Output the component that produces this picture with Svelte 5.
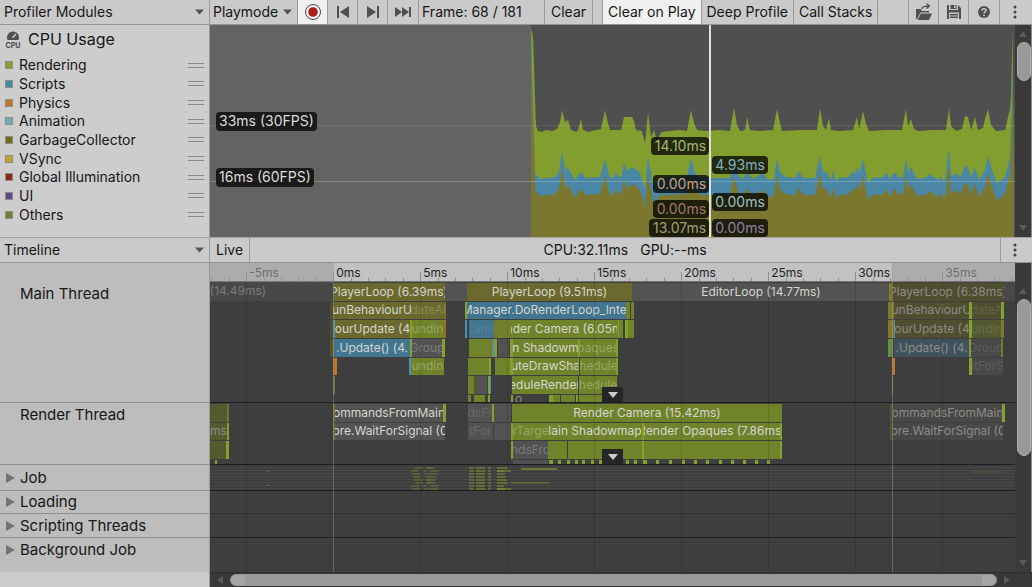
<script>
  const legend = [
    ['Rendering', '#829e2e'],
    ['Scripts', '#4a87a6'],
    ['Physics', '#c47429'],
    ['Animation', '#6fadb5'],
    ['GarbageCollector', '#756a1f'],
    ['VSync', '#c2a233'],
    ['Global Illumination', '#8b2b17'],
    ['UI', '#5f4a8a'],
    ['Others', '#7b7a31']
  ];

  // Chart series, in chart units (805 x 212)
  const H = 212;
  const rendering = [[321,3],[323,12],[324,40],[325,75],[326,101],[328,106],[332,107],[336,105],[342,106],[347,104],[350,97],[352,85],[355,97],[358,95],[361,105],[366,107],[368,105],[371,94],[373,105],[378,107],[386,105],[391,104],[395,85],[398,98],[400,105],[411,105],[414,92],[422,92],[424,96],[426,105],[432,106],[435,118],[438,87],[441,112],[444,105],[447,116],[451,107],[460,106],[470,105],[477,106],[481,85],[484,98],[487,105],[497,106],[508,105],[520,106],[524,83],[527,100],[530,106],[535,105],[537,92],[540,105],[550,106],[563,105],[567,84],[570,98],[572,106],[590,105],[607,105],[610,83],[613,101],[616,105],[619,93],[621,105],[630,106],[643,105],[647,92],[649,104],[653,86],[656,99],[659,106],[675,105],[692,105],[696,84],[698,101],[701,94],[704,104],[708,106],[722,105],[736,105],[739,83],[741,101],[746,106],[752,104],[755,91],[758,92],[761,105],[765,92],[768,105],[773,103],[775,94],[778,84],[781,100],[786,106],[795,105],[798,92],[800,84],[801,72],[802.6,3]];
  const scripts = [[321,3],[322,45],[324,100],[325,148],[330,154],[345,152],[349,147],[352,126],[355,145],[358,143],[365,155],[371,147],[376,153],[390,152],[395,134],[399,150],[402,154],[406,148],[411,153],[414,138],[417,146],[423,142],[430,148],[435,164],[438,131],[441,148],[444,162],[450,153],[477,152],[481,133],[485,148],[490,153],[520,153],[524,134],[528,150],[533,154],[537,147],[543,154],[553,148],[558,155],[564,154],[567,133],[570,147],[575,152],[585,153],[589,146],[593,153],[605,153],[610,131],[613,148],[616,146],[621,155],[623,146],[626,156],[630,152],[638,153],[642,147],[644,149],[648,142],[650,148],[653,133],[658,158],[662,153],[673,152],[677,147],[679,154],[685,147],[688,152],[693,152],[696,133],[698,148],[701,142],[707,154],[717,152],[720,149],[728,155],[731,151],[733,156],[736,152],[738,128],[739,126],[741,151],[747,148],[750,153],[755,141],[758,142],[761,152],[765,142],[769,155],[775,145],[778,131],[782,145],[787,158],[795,152],[800,132],[801,100],[803,40]];
  const others = scripts.map(([x, y]) => [x, y + 17]);
  const area = (pts) => `321,${H} ` + pts.map((p) => p.join(',')).join(' ') + ` 804,${H}`;

  // Tags hanging beside the selected frame: side, top, text, colour
  const tags = [
    ['l', 112, '14.10ms', '#a9b574'],
    ['r', 131, '4.93ms', '#86aec2'],
    ['l', 150, '0.00ms', '#cda27c'],
    ['r', 168, '0.00ms', '#9cc3c8'],
    ['l', 175, '0.00ms', '#a0786b'],
    ['l', 194, '13.07ms', '#a3a07a'],
    ['r', 194, '0.00ms', '#8d84a3']
  ];

  const SPAN = 805;
  const pc = (v) => (v / SPAN) * 100 + '%';
  const ticks = Array.from({ length: 47 }, (_, i) => ({ x: 1.4 + i * 17.4, major: (i - 2) % 5 === 0 }));
  const majors = ticks.filter((t) => t.major).map((t, i) => ({ x: t.x, text: i * 5 - 5 + 'ms' }));

  // Bars: [start, end, colour class, label, dim level]
  const mainRows = [
    [[0,123,'idle'],[0,56,'idle','(14.49ms)',1],[123,235,'ol','PlayerLoop (6.39ms)'],[235,257,'ed'],[257,422,'ol','PlayerLoop (9.51ms)'],[422,680,'ed','EditorLoop (14.77ms)'],[682,794,'dol','PlayerLoop (6.38ms)',1],[679,682,'sol'],[794,805,'idle']],
    [[120,123,'dol'],[123,201,'ol','unBehaviourU'],[201,235,'ol','dateAl',1],[235,236,'sol'],[257,416,'bl','Manager.DoRenderLoop_Inter'],[255,257,'sg'],[416,420,'gr'],[421,424,'gr'],[684,759,'dol','unBehaviourU',1],[678,684,'sol'],[759,762,'sg'],[762,791,'dol','dateA',2],[791,794,'sg']],
    [[120,123,'dol'],[123,126,'sb'],[125,200,'ol','ourUpdate (4'],[200,202,'sg'],[202,233,'gr','undin',1],[233,236,'or2'],[255,257,'sb'],[259,284,'bl','Came',2],[284,287,'sol'],[287,413,'gr'],[301,407,'gr','nder Camera (6.05m'],[408,409,'sg'],[415,418,'sg'],[418,424,'gr'],[685,759,'dol','ourUpdate (4',1],[678,684,'sol'],[684,685,'sb'],[759,762,'sg'],[762,791,'dgr','undin',2],[791,794,'sol']],
    [[120,123,'dgr'],[123,124,'or'],[124,200,'bl','.Update() (4.'],[200,202,'sg'],[202,232,'gy','Group',1],[232,235,'sg'],[259,279,'gr'],[279,282,'sol'],[282,284,'sb'],[284,287,'sg'],[288,299,'gy'],[303,368,'gr','n Shadowm'],[300,303,'sg'],[368,370,'sg'],[370,406,'gr','paques',1],[406,408,'sg'],[684,759,'dbl','.Update() (4.',1],[678,681,'tg'],[681,683,'sol'],[759,761,'sg'],[761,791,'dgy','Group',2],[791,793,'sol']],
    [[123,127,'or'],[201,234,'gr','undin',1],[199,201,'sb'],[258,279,'gr'],[279,281,'sg'],[285,300,'gr'],[303,368,'gr','uteDrawSha'],[300,303,'sg'],[368,369,'sg'],[370,407,'gr','hedule',1],[406,408,'sg'],[682,685,'or'],[759,762,'sg'],[762,793,'dgy','itForS',2]],
    [[123,125,'sol'],[258,264,'gr'],[264,267,'dgr'],[267,277,'gy'],[278,280,'sg'],[280,281,'sb'],[302,368,'gr','eduleRender'],[369,407,'gr','hedule',1],[682,683,'sol']],
    [[258,261,'gr'],[264,275,'gr'],[278,280,'sg'],[301,303,'sg'],[303,314,'none','o',1],[339,343,'sg'],[343,350,'gr'],[351,365,'gr'],[366,368,'sg'],[369,396,'gr']]
  ];
  const renderRows = [
    [[0,17,'dgr'],[17,19,'tg2'],[125,233,'ed','ommandsFromMain'],[123,125,'sol'],[233,236,'sg'],[258,282,'gy','dsFr',2],[282,284,'sg'],[284,301,'gy'],[302,572,'gr','Render Camera (15.42ms)'],[683,792,'dgy','ommandsFromMain',1],[680,683,'tol'],[792,795,'sg']],
    [[0,17,'dgr','ms',1],[17,19,'sg'],[125,235,'ed','ore.WaitForSignal (0'],[123,125,'sol'],[258,283,'gy','tFor',2],[284,301,'gy'],[303,338,'gr','rTarge',1],[301,303,'sg'],[338,432,'gr','lain Shadowmap'],[432,434,'sg'],[434,570,'gr','Render Opaques (7.86ms)'],[570,572,'sg'],[683,793,'dgy','ore.WaitForSignal (0',1],[680,683,'tol']],
    [[0,16,'dgr'],[16,19,'sg'],[303,338,'gy','ndsFro',1],[301,303,'sg'],[338,357,'gr'],[358,432,'gr'],[432,434,'sg'],[434,570,'gr'],[570,572,'sg']],
    [[5,7,'sg'],[303,338,'gy'],...[339,433].map((x) => [x, x + 4, 'sg']),...[348,357,365,372,381,389,416,424,446,459,472,484,496,509,521,533,545,557].map((x) => [x, x + 3, 'sg'])]
  ];

  // Job worker samples: x, y, width, opacity
  const jobs = [];
  for (const y of [2, 5, 8, 11, 14, 17, 20, 23]) {
    const s = (y * 7) % 5;
    jobs.push([201 + s, y, 8, 0.35], [213 + s, y, 4, 0.3], [220 - s, y, 9, 0.35]);
    jobs.push([259, y, 5, 0.5], [266, y, 9, 0.55], [278, y, 3, 0.5], [287, y, 7 + s, 0.55]);
  }
  jobs.push([287, 5, 14, 0.6], [287, 23, 14, 0.6], [311, 3, 36, 0.7], [301, 17, 38, 0.4], [761, 6, 31, 0.2], [57, 5, 3, 0.3], [57, 19, 3, 0.3]);

  const groups = [['Job', 'h26'], ['Loading', 'h23'], ['Scripting Threads', 'h24'], ['Background Job', 'rest']];
</script>

{#snippet caret()}
  <svg class="caret" width="9" height="6" viewBox="0 0 9 6"><path d="M0 .5h9L4.5 5.5z" fill="#54544e" /></svg>
{/snippet}
{#snippet dots()}
  <svg width="4" height="14" viewBox="0 0 4 14" fill="#444"><circle cx="2" cy="2" r="1.5" /><circle cx="2" cy="7" r="1.5" /><circle cx="2" cy="12" r="1.5" /></svg>
{/snippet}
{#snippet arrow(d)}
  <svg class="arrow" width="8" height="6" viewBox="0 0 8 6"><path d={d === 'up' ? 'M0 6h8L4 0z' : 'M0 0h8L4 6z'} fill="#5b5b56" /></svg>
{/snippet}
{#snippet bars(rows)}
  {#each rows as row}
    <div class="row">
      {#each row as [a, b, kind, text, dim]}
        <div class="bar {kind}" style="left:{pc(a)};width:{pc(b - a)}">
          {#if text}<span class:dim={dim === 1} class:faint={dim === 2}>{text}</span>{/if}
        </div>
      {/each}
    </div>
  {/each}
{/snippet}

<div class="profiler">
  <header class="split toolbar">
    <label class="pick side"><select aria-label="Profiler Modules"><option>Profiler Modules</option></select>{@render caret()}</label>
    <div class="tools">
      <label class="pick mode"><select aria-label="Target"><option>Playmode</option></select>{@render caret()}</label>
      <button class="ico on" aria-label="Record"><svg width="18" height="18" viewBox="0 0 18 18"><circle cx="9" cy="9" r="7.5" fill="#f4f4f4" stroke="#444" /><circle cx="9" cy="9" r="4.8" fill="#a82018" /></svg></button>
      <button class="ico" aria-label="Previous frame"><svg width="14" height="12" viewBox="0 0 14 12" fill="#505050"><path d="M1 0h2v12H1zM13 0v12L4 6z" /></svg></button>
      <button class="ico" aria-label="Next frame"><svg width="14" height="12" viewBox="0 0 14 12" fill="#505050"><path d="M11 0h2v12h-2zM1 0v12l9-6z" /></svg></button>
      <button class="ico last" aria-label="Current frame"><svg width="18" height="12" viewBox="0 0 18 12" fill="#505050"><path d="M1 1v10l7-5zM8 1v10l7-5zM15 1h2v10h-2z" /></svg></button>
      <span class="frame">Frame: 68 / 181</span>
      <button>Clear</button>
      <span class="gap"></span>
      <button class="on tight">Clear on Play</button>
      <button class="tight">Deep Profile</button>
      <button class="tight">Call Stacks</button>
      <span class="fill"></span>
      <button class="ico" aria-label="Load"><svg width="18" height="18" viewBox="0 0 18 18"><path d="M1 16V6h5l1 2h7v1.500H5.500L2 16zM5.800 10.500H17L14 17H2.500z" fill="#505050" /><path d="M7 6c0-2.500 2-3 7-3M11.500.500L14.500 3l-3 2.500" fill="none" stroke="#505050" stroke-width="1.300" /></svg></button>
      <button class="ico" aria-label="Save"><svg width="16" height="16" viewBox="0 0 16 16"><path d="M1 1h2v5h9V1l3 3v11h-2V8.500H3V15H1z" fill="#505050" /><path d="M4.500 1h6v4h-6zM4 10h8v1.500H4zM4 12.500h8V14H4z" fill="#505050" /><path d="M8 1.500h1.500v2.500H8z" fill="#ccc" /></svg></button>
      <button class="ico help" aria-label="Help"><svg width="12" height="12" viewBox="0 0 12 12"><circle cx="6" cy="6" r="6" fill="#505050" /><path d="M4 4.600c0-2.500 4-2.500 4 0C8 6 6 5.800 6 7.300" fill="none" stroke="#ccc" stroke-width="1.500" /><circle cx="6" cy="9.300" r=".9" fill="#ccc" /></svg></button>
      <button class="ico menu" aria-label="More">{@render dots()}</button>
    </div>
  </header>

  <section class="split upper">
    <aside class="legend">
      <h1>
        <svg width="18" height="18" viewBox="0 0 18 18"><path d="M3.500 10A6 6 0 1 1 14.500 10z" fill="#505050" /><path d="M8.500 7.800L12 4" stroke="#ccc" stroke-width="1.500" /><text x="9" y="17.500" text-anchor="middle" font-size="7" font-weight="700" fill="#444">CPU</text></svg>
        CPU Usage
      </h1>
      <ul>
        {#each legend as [name, color]}
          <li><label><input type="checkbox" checked style="background:{color}" />{name}</label><i class="grip"></i></li>
        {/each}
      </ul>
    </aside>
    <div class="chart">
      <div class="plot">
        <svg viewBox="0 0 805 212" preserveAspectRatio="none">
          <rect width="805" height="212" fill="#636363" />
          <rect x="321" width="484" height="212" fill="#4f4f4f" />
          <polygon points={area(rendering)} fill="#829e2e" />
          <polygon points={area(scripts)} fill="#4a87a6" />
          <polygon points={area(others)} fill="#7b772e" />
          <path d="M0 100.500h805" stroke="#fff" stroke-opacity=".1" />
          <path d="M0 156.500h805" stroke="#fff" stroke-opacity=".22" />
          <rect x="499" width="2" height="212" fill="#e0e0dc" />
        </svg>
        <span class="tag fps30">33ms (30FPS)</span>
        <span class="tag fps60">16ms (60FPS)</span>
        {#each tags as [side, top, text, color]}
          <span class="tag {side}" style="top:{top}px;color:{color}">{text}</span>
        {/each}
      </div>
      <div class="vscroll">{@render arrow('up')}<i class="thumb short"></i>{@render arrow('down')}</div>
    </div>
  </section>

  <section class="split bar-head">
    <label class="pick side"><select aria-label="View"><option>Timeline</option></select>{@render caret()}</label>
    <div class="tools status">
      <button class="live">Live</button>
      <span class="totals"><span>CPU:32.11ms</span><span>GPU:--ms</span></span>
      <button class="ico more" aria-label="More">{@render dots()}</button>
    </div>
  </section>

  <section class="split lower">
    <aside class="names">
      <div class="name tall">Main Thread</div>
      <div class="name render">Render Thread</div>
      {#each groups as [name, size]}
        <button class="name fold {size}"><svg width="9" height="10" viewBox="0 0 9 10"><path d="M0 0v10l9-5z" fill="#747474" /></svg>{name}</button>
      {/each}
    </aside>
    <div class="time">
      <div class="view">
        <div class="track">
          <div class="ruler">
            {#each ticks as t}
              <i class:major={t.major} style="left:{pc(t.x)}"></i>
            {/each}
            {#each majors as m}
              <span style="left:{pc(m.x)}" class:out={m.text === '-5ms' || m.text === '35ms'}>{m.text}</span>
            {/each}
            <b class="shade" style="left:0;width:{pc(123)}"></b>
            <b class="shade" style="left:{pc(682)};width:{pc(123)}"></b>
          </div>
          <div class="lane main">{@render bars(mainRows)}<button class="expand" aria-label="Expand main thread"><svg width="10" height="6" viewBox="0 0 10 6"><path d="M0 0h10L5 6z" fill="#ccc" /></svg></button></div>
          <div class="lane render">{@render bars(renderRows)}<button class="expand" aria-label="Expand render thread"><svg width="10" height="6" viewBox="0 0 10 6"><path d="M0 0h10L5 6z" fill="#ccc" /></svg></button></div>
          <div class="lane jobs h26">
            {#each jobs as [x, y, w, o]}
              <i style="left:{pc(x)};top:{y}px;width:{pc(w)};opacity:{o}"></i>
            {/each}
          </div>
          <div class="lane h23 soft"></div>
          <div class="lane h24"></div>
          <div class="lane rest"></div>
          {#each majors as m}<i class="grid" style="left:{pc(m.x)}"></i>{/each}
          <i class="edge" style="left:{pc(123)}"></i>
          <i class="edge" style="left:{pc(682)}"></i>
        </div>
        <div class="vscroll wide">{@render arrow('up')}<i class="thumb long"></i>{@render arrow('down')}</div>
      </div>
      <div class="hscroll">
        <svg width="6" height="8" viewBox="0 0 6 8"><path d="M6 0v8L0 4z" fill="#5b5b56" /></svg>
        <i class="thumb"></i>
        <svg width="6" height="8" viewBox="0 0 6 8"><path d="M0 0v8l6-4z" fill="#5b5b56" /></svg>
      </div>
    </div>
  </section>
</div>

<style>
  :global(body) { margin: 0; background: #cbcbcb; }
  .profiler { display: flex; flex-direction: column; min-height: 100vh; font-family: Inter, "Liberation Sans", sans-serif; font-size: 14px; line-height: 18px; color: #161616; }
  .profiler * { box-sizing: border-box; }
  button, select { font: inherit; color: inherit; background: none; border: 0; border-radius: 0; padding: 0; margin: 0; }
  svg { display: block; flex: none; }
  .split { display: grid; grid-template-columns: 210px minmax(0, 1fr); }
  .toolbar, .bar-head { background: #cacaca; border-bottom: 1px solid #949494; height: 25px; }
  .bar-head { height: 26px; border-top: 1px solid #a4a4a4; }
  .pick { display: flex; align-items: center; position: relative; border-right: 1px solid #999; }
  .pick select { appearance: none; width: 100%; height: 100%; padding-left: 4px; }
  .caret { position: absolute; right: 5px; pointer-events: none; }
  .tools { display: flex; min-width: 0; }
  .tools button { display: flex; align-items: center; justify-content: center; padding: 0 6px; border-right: 1px solid #999; white-space: nowrap; }
  .tools .tight { padding: 0 5px; }
  .tools .ico { width: 30px; padding: 0; }
  .tools .last { width: 31px; }
  .tools .on { background: #f0f0f0; }
  .mode { width: 88px; }
  .mode select { padding-left: 3px; }
  .frame { width: 126px; padding: 3px 0 0 3px; border-right: 1px solid #999; white-space: nowrap; }
  .gap { width: 10px; border-right: 1px solid #999; }
  .fill { flex: 1; border-right: 1px solid #999; }
  .tools .help { width: 31px; }
  .tools .menu, .tools .more { width: 32px; border-right: 0; padding-right: 2px; }
  .tools .more { border-left: 1px solid #999; padding-right: 3px; }
  .totals { flex: 1; display: flex; gap: 12px; align-items: center; justify-content: center; }

  .legend { background: #cdcdcd; border-right: 1px solid #999; }
  .legend h1 { display: flex; align-items: center; gap: 6px; margin: 0; padding: 0 4px 3px; height: 31px; font-size: 16px; font-weight: 400; line-height: 18px; }
  .legend ul { list-style: none; margin: 0; padding: 0; height: 168px; display: grid; grid-template-rows: repeat(9, 1fr); }
  .legend li { display: flex; align-items: center; justify-content: space-between; padding: 0 5px; }
  .legend label { display: flex; align-items: center; gap: 6px; }
  .legend input { appearance: none; width: 8px; height: 8px; margin: 0; border: 1px solid #8c8c84; }
  .grip { width: 16px; height: 5px; border: solid #888; border-width: 1px 0; }

  .chart { display: flex; height: 212px; background: #4f4f4f; }
  .plot { position: relative; flex: 1; min-width: 0; overflow: hidden; }
  .plot > svg { width: 100%; height: 212px; }
  .tag { position: absolute; height: 18px; padding: 0 3px; border-radius: 4px; background: rgba(0, 0, 0, .75); color: #ddd; white-space: nowrap; }
  .fps30, .fps60 { left: 6px; height: 19px; background: #1a1a1a; }
  .fps30 { top: 87px; }
  .fps60 { top: 143px; }
  .tag.l { right: 38%; padding-left: 4px; }
  .tag.r { left: 62.400%; }
  .vscroll { display: flex; flex-direction: column; align-items: center; width: 17px; padding: 6px 0; background: #3a3a3a; border-right: 1px solid #8c8c8c; }
  .thumb { background: #999; border: 1px solid #aeaeae; border-radius: 7px; }
  .vscroll .thumb { width: 14px; margin-left: 2px; }
  .short { height: 39px; margin-top: 5px; margin-bottom: auto; }
  .long { height: 157px; margin-top: 5px; margin-bottom: auto; }

  .lower { flex: 1; }
  .names { display: flex; flex-direction: column; border-right: 1px solid #999; background: #cbcbcb; padding-bottom: 15px; font-size: 15px; }
  .name { flex: none; text-align: left; background: #bdbdbd; border-bottom: 1px solid #909090; padding: 0 0 0 20px; }
  .name.tall { height: 140px; padding-top: 22px; }
  .name.render { height: 62px; padding-top: 3px; }
  .name.fold { display: flex; align-items: center; gap: 5px; padding-left: 6px; }
  .h26 { height: 26px; }
  .h23 { height: 23px; }
  .h24 { height: 24px; }
  .name.rest { flex: 1 0 34px; align-items: flex-start; padding-top: 3px; border-bottom: 0; }
  .name.rest svg { margin-top: 4px; }

  .time { display: flex; flex-direction: column; min-width: 0; background: #3e3e3e; }
  .view { display: flex; flex: 1; }
  .track { position: relative; display: flex; flex-direction: column; flex: 1; min-width: 0; overflow: hidden; }
  .ruler { position: relative; height: 19px; background: #c2c2c2; border-bottom: 1px solid #777; font-size: 12px; line-height: 18px; overflow: hidden; }
  .ruler i { position: absolute; bottom: 0; width: 1px; height: 3px; background: #8d8d8d; }
  .ruler i.major { height: 9px; }
  .ruler span { position: absolute; top: 1px; padding-left: 3px; color: #222; }
  .ruler .out { color: #444; }
  .shade { position: absolute; top: 0; bottom: 0; background: rgba(150, 150, 150, .5); }
  .lane { position: relative; flex: none; border-bottom: 1px solid #1e1e1e; overflow: hidden; }
  .lane.main { height: 121px; display: grid; grid-template-rows: repeat(6, minmax(0, 56fr)) minmax(0, 24fr); }
  .lane.render { height: 62px; display: grid; grid-template-rows: repeat(3, minmax(0, 56fr)) minmax(0, 15fr); }
  .lane.soft { border-color: #303030; }
  .lane.rest { flex: 1 0 34px; border-bottom: 0; }
  .row { position: relative; min-height: 0; overflow: hidden; }
  .bar { position: absolute; top: 1px; bottom: 0; display: flex; justify-content: center; align-items: center; overflow: hidden; font-size: 12px; line-height: 16px; white-space: nowrap; color: #d6d6d0; }
  .bar span { flex: none; }
  .bar .dim { color: #8d8d87; }
  .bar .faint { color: rgba(170, 170, 165, .25); }
  .gr .dim { color: #98a763; }
  .ol .dim { color: #8b8a55; }
  .gy .dim, .idle .dim { color: #7b7b7b; }
  .bar.idle { background: #484848; top: 0; }
  .bar.ed { background: #535353; }
  .bar.ol { background: #6b692d; }
  .bar.dol { background: #4f4e30; }
  .bar.sol { background: #7d792c; }
  .bar.tol { background: #565530; }
  .bar.gr { background: #70832b; }
  .bar.dgr { background: #525b2f; }
  .bar.sg { background: #84a12f; }
  .bar.tg { background: #5d8f52; }
  .bar.tg2 { background: #617c3c; }
  .bar.bl { background: #427590; }
  .bar.dbl { background: #3f525e; }
  .bar.sb { background: #4f8fb3; }
  .bar.or { background: #c27426; }
  .bar.or2 { background: #8f6f2b; }
  .bar.gy { background: #525252; }
  .bar.dgy { background: #484848; }
  .expand { position: absolute; left: 48.700%; bottom: 0; width: 21px; height: 15px; display: flex; align-items: center; justify-content: center; background: #262626; }
  .jobs { background: repeating-linear-gradient(#3e3e3e 0 2px, #484848 2px 3px); }
  .jobs i { position: absolute; height: 2px; background: #7c912e; }
  .grid { position: absolute; top: 19px; bottom: 0; width: 1px; background: rgba(0, 0, 0, .12); }
  .edge { position: absolute; top: 0; bottom: 0; width: 1px; background: rgba(150, 150, 150, .5); }
  .wide { padding-top: 25px; }
  .hscroll { display: flex; align-items: center; height: 15px; gap: 7px; padding: 0 22px 0 7px; background: #383838; border-top: 1px solid #2e2e2e; }
  .hscroll .thumb { flex: 1; height: 12px; background: linear-gradient(90deg, #a5a5a5 14px, #999 14px calc(100% - 14px), #a5a5a5 calc(100% - 14px)); border-color: #999; }
</style>
